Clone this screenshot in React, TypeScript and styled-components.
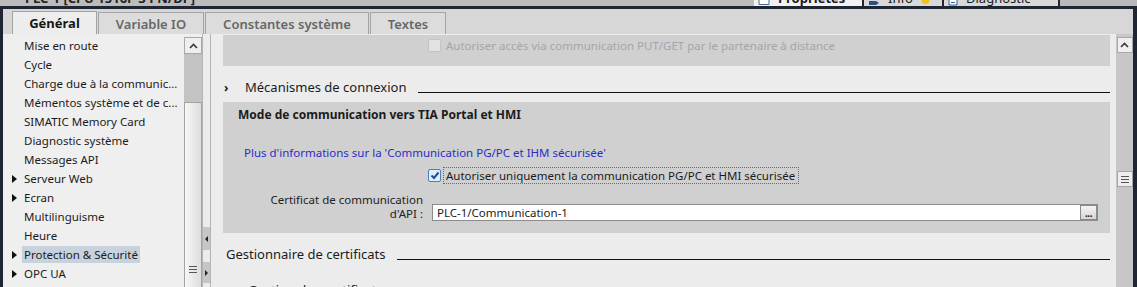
import styled, { createGlobalStyle } from 'styled-components';

const GlobalStyle = createGlobalStyle`
	html, body {
		margin: 0;
		padding: 0;
	}
	body {
		font-family: 'Noto Sans', 'Liberation Sans', sans-serif;
		font-size: 11.5px;
		color: #1b1b1b;
		overflow: hidden;
	}
`;

const dark = '#1e2633';

const Window = styled.div`
	width: 1137px;
	height: 287px;
	display: flex;
	flex-direction: column;
	overflow: hidden;
	background: #d6d6d6;
`;

const TopStrip = styled.div`
	height: 6px;
	flex: none;
	display: flex;
	align-items: flex-end;
	background: #bcbcbc;
	overflow: hidden;
`;

const TopTitle = styled.div`
	flex: 1;
	height: 6px;
	padding-left: 25px;
	display: flex;
	align-items: flex-end;
	overflow: hidden;

	span {
		font-weight: 700;
		font-size: 13px;
		line-height: 14px;
		margin-bottom: 1px;
		color: #222;
	}
`;

const TopTab = styled.div<{ $w: number; $active?: boolean }>`
	width: ${({ $w }) => $w}px;
	height: 6px;
	flex: none;
	display: flex;
	align-items: flex-end;
	gap: 8px;
	padding-left: 4px;
	box-sizing: border-box;
	overflow: hidden;
	background: ${({ $active }) => ($active ? '#f2f2f2' : '#d9d9d9')};
	border-right: 2px solid ${dark};
	font-size: 13px;
	font-weight: ${({ $active }) => ($active ? 700 : 400)};

	span {
		line-height: 14px;
		margin-bottom: 1px;
	}

	svg {
		flex: none;
	}
`;

const TopRest = styled.div`
	width: 77px;
	flex: none;
	height: 6px;
	background: #b9b9b9;
`;

const DarkBand = styled.div`
	height: 3px;
	flex: none;
	background: ${dark};
`;

const Main = styled.div`
	flex: 1;
	min-height: 0;
	display: flex;
	flex-direction: column;
	border-left: 3px solid ${dark};
	border-right: 4px solid ${dark};
`;

const TabBar = styled.div`
	height: 25px;
	flex: none;
	display: flex;
	align-items: flex-end;
	gap: 1px;
	padding-left: 9px;
	background: #d7d7d7;
`;

const Tab = styled.div<{ $w: number; $active?: boolean }>`
	width: ${({ $w }) => $w}px;
	height: ${({ $active }) => ($active ? 23 : 22)}px;
	box-sizing: border-box;
	display: flex;
	align-items: center;
	justify-content: center;
	border: 1px solid #a4a4a4;
	border-bottom: none;
	background: ${({ $active }) => ($active ? '#ededed' : '#dcdcdc')};
	color: ${({ $active }) => ($active ? '#161616' : '#676767')};
	font-size: 13px;
	font-weight: ${({ $active }) => ($active ? 700 : 600)};
`;

const Content = styled.div`
	flex: 1;
	min-height: 0;
	display: flex;
`;

const LeftPanel = styled.div`
	width: 181px;
	flex: none;
	background: #efefef;
	padding-top: 2px;
	overflow: hidden;
	box-sizing: border-box;
`;

const NavItem = styled.div`
	height: 19px;
	display: flex;
	align-items: center;
	padding-left: 7px;
	white-space: nowrap;
`;

const Caret = styled.span<{ $show?: boolean }>`
	width: 12px;
	flex: none;
	display: flex;
	padding-left: 2px;
	box-sizing: border-box;

	&::before {
		content: '';
		display: ${({ $show }) => ($show ? 'block' : 'none')};
		border-left: 5px solid #111;
		border-top: 4px solid transparent;
		border-bottom: 4px solid transparent;
	}
`;

const NavLabel = styled.span<{ $selected?: boolean }>`
	padding: 1px 2px;
	line-height: 15px;
	background: ${({ $selected }) => ($selected ? '#c7d2dc' : 'transparent')};
`;

const LeftScroll = styled.div`
	width: 18px;
	flex: none;
	display: flex;
	flex-direction: column;
	padding-top: 3px;
	background: #efefef;
	box-sizing: border-box;
`;

const ScrollButton = styled.div<{ $h: number }>`
	height: ${({ $h }) => $h}px;
	flex: none;
	display: flex;
	align-items: center;
	justify-content: center;
	background: #efefef;
	border: 1px solid #a9a9a9;
	box-sizing: border-box;
`;

const Track = styled.div`
	height: 48px;
	flex: none;
	background: #c3c3c3;
`;

const Thumb = styled.div`
	flex: 1;
	display: flex;
	flex-direction: column;
	justify-content: flex-end;
	align-items: center;
	padding-bottom: 14px;
	background: linear-gradient(to right, #f6f6f6, #dedede);
	border: 1px solid #a3a3a3;
	border-bottom: none;
`;

const Splitter = styled.div`
	width: 9px;
	flex: none;
	display: flex;
	flex-direction: column;
	justify-content: flex-end;
	gap: 12px;
	padding-bottom: 4px;
	box-sizing: border-box;
	background: #ececec;
	border-left: 1px solid #b4b4b4;
	border-right: 1px solid #b4b4b4;
`;

const SplitArrow = styled.div<{ $h: number; $dir: 'left' | 'right' }>`
	height: ${({ $h }) => $h}px;
	display: flex;
	align-items: center;
	justify-content: center;
	background: #c6c6c6;

	&::before {
		content: '';
		border-top: 3px solid transparent;
		border-bottom: 3px solid transparent;
		${({ $dir }) =>
			$dir === 'left' ? 'border-right: 3px solid #222;' : 'border-left: 3px solid #222;'}
	}
`;

const RightPanel = styled.div`
	flex: 1;
	min-width: 0;
	display: flex;
	flex-direction: column;
	padding: 1px 6px 0 12px;
	background: #ececec;
	overflow: hidden;
`;

const GreyBox = styled.div<{ $h: number; $mt?: number }>`
	height: ${({ $h }) => $h}px;
	margin-top: ${({ $mt = 0 }) => $mt}px;
	flex: none;
	background: #d0d0d0;
	display: flex;
	flex-direction: column;
`;

const FormRow = styled.div<{ $mt?: number }>`
	display: grid;
	grid-template-columns: 205px 1fr;
	align-items: center;
	margin-top: ${({ $mt = 0 }) => $mt}px;
`;

const FieldLabel = styled.div`
	text-align: right;
	padding-right: 5px;
	line-height: 14px;
	color: #222;
	align-self: end;
`;

const CheckLine = styled.div<{ $disabled?: boolean }>`
	display: flex;
	align-items: center;
	gap: 2px;
	color: ${({ $disabled }) => ($disabled ? '#a5a5a5' : '#1b1b1b')};
`;

const CheckBox = styled.span<{ $checked?: boolean; $disabled?: boolean }>`
	width: 13px;
	height: 13px;
	flex: none;
	box-sizing: border-box;
	display: flex;
	align-items: center;
	justify-content: center;
	border: 1px solid ${({ $disabled }) => ($disabled ? '#c4c4c4' : '#4a7fb8')};
	border-radius: 2px;
	background: ${({ $disabled, $checked }) =>
		$disabled ? '#e3e3e3' : $checked ? '#dfeefb' : '#fff'};
`;

const FocusText = styled.span<{ $focus?: boolean }>`
	padding: 0 3px 0 2px;
	line-height: 15px;
	border: 1px dotted ${({ $focus }) => ($focus ? '#6a6a6a' : 'transparent')};
`;

const SectionHead = styled.div<{ $mt: number; $pl: number }>`
	height: 18px;
	flex: none;
	margin-top: ${({ $mt }) => $mt}px;
	padding-left: ${({ $pl }) => $pl}px;
	display: flex;
	align-items: center;
	font-size: 13px;
	white-space: nowrap;
`;

const Chevron = styled.span`
	width: 21px;
	flex: none;
	font-weight: 700;
	font-size: 12px;
`;

const Rule = styled.div`
	flex: 1;
	height: 1px;
	margin: 11px 0 0 12px;
	background: #111;
`;

const BoxTitle = styled.div`
	padding: 4px 0 0 15px;
	line-height: 18px;
	font-weight: 700;
	font-size: 12px;
`;

const InfoLink = styled.div`
	margin: 21px 0 6px 21px;
	line-height: 16px;
	color: #2b2bc8;
`;

const TextField = styled.div`
	height: 17px;
	margin: 0 12px 0 4px;
	box-sizing: border-box;
	display: flex;
	align-items: center;
	justify-content: space-between;
	padding-left: 4px;
	border: 1px solid #8c8c8c;
	background: #fff;
	color: #1b1b1b;
	align-self: end;
`;

const DotsButton = styled.div`
	width: 17px;
	height: 15px;
	box-sizing: border-box;
	display: flex;
	align-items: flex-end;
	justify-content: center;
	padding-bottom: 3px;
	border: 1px solid #8a8a8a;
	background: linear-gradient(#f4f4f4, #d6d6d6);
	font-weight: 700;
	font-size: 10px;
	line-height: 6px;
	letter-spacing: -0.5px;
`;

const RightScroll = styled.div`
	width: 17px;
	flex: none;
	display: flex;
	flex-direction: column;
	align-items: center;
	padding-top: 3px;
	background: #c7c7c7;
`;

const GripBox = styled.div`
	width: 16px;
	height: 16px;
	margin-top: 118px;
	box-sizing: border-box;
	display: flex;
	align-items: center;
	justify-content: center;
	background: #eeeeee;
	border: 1px solid #a5a5a5;
`;

const UpIcon = () => (
	<svg width='11' height='8' viewBox='0 0 11 8'>
		<path d='M2 6 L5.5 2.5 L9 6' fill='none' stroke='#3a3a3a' strokeWidth='1.6' />
	</svg>
);

const GripIcon = () => (
	<svg width='8' height='7' viewBox='0 0 8 7'>
		<path d='M0 0.5 H8 M0 3.5 H8 M0 6.5 H8' stroke='#555' strokeWidth='1' />
	</svg>
);

const CheckIcon = () => (
	<svg width='10' height='9' viewBox='0 0 10 9'>
		<path d='M1.5 4.5 L4 7 L8.5 1.5' fill='none' stroke='#1d4f8c' strokeWidth='2' />
	</svg>
);

// bottom halves of the small icons in the inspector tabs above
const SheetIcon = () => (
	<svg width='12' height='6' viewBox='0 0 12 6'>
		<path d='M1 0 V4.5 H11 V0' fill='#fff' stroke='#4b6a96' strokeWidth='1' />
	</svg>
);

const InfoArrowIcon = () => (
	<svg width='12' height='6' viewBox='0 0 12 6'>
		<path d='M1 1 H8 L11 3 L8 5 H1 Z' fill='#2f4f8a' />
	</svg>
);

const DiagIcon = () => (
	<svg width='10' height='6' viewBox='0 0 10 6'>
		<path d='M1 0 V5 H9 V0' fill='#fff' stroke='#3b5b9a' strokeWidth='1' />
		<path d='M3 2.5 H7' stroke='#3b5b9a' strokeWidth='1' />
	</svg>
);

const WarnDot = () => (
	<svg width='9' height='6' viewBox='0 0 9 6'>
		<path d='M0.5 0 A4 4 0 0 0 8.5 0 Z' fill='#f2c21a' />
	</svg>
);

const navItems: { label: string; caret?: boolean; selected?: boolean }[] = [
	{ label: 'Mise en route' },
	{ label: 'Cycle' },
	{ label: 'Charge due à la communic...' },
	{ label: 'Mémentos système et de c...' },
	{ label: 'SIMATIC Memory Card' },
	{ label: 'Diagnostic système' },
	{ label: 'Messages API' },
	{ label: 'Serveur Web', caret: true },
	{ label: 'Ecran', caret: true },
	{ label: 'Multilinguisme' },
	{ label: 'Heure' },
	{ label: 'Protection & Sécurité', caret: true, selected: true },
	{ label: 'OPC UA', caret: true },
];

const App = () => {
	return (
		<Window>
			<GlobalStyle />
			<TopStrip>
				<TopTitle>
					<span>PLC-1 [CPU 1516F-3 PN/DP]</span>
				</TopTitle>
				<TopTab $w={110} $active>
					<SheetIcon />
					<span>Propriétés</span>
				</TopTab>
				<TopTab $w={80}>
					<InfoArrowIcon />
					<span>Info</span>
					<WarnDot />
				</TopTab>
				<TopTab $w={116}>
					<DiagIcon />
					<span>Diagnostic</span>
				</TopTab>
				<TopRest />
			</TopStrip>
			<DarkBand />
			<Main>
				<TabBar>
					<Tab $w={85} $active>
						Général
					</Tab>
					<Tab $w={106}>Variable IO</Tab>
					<Tab $w={164}>Constantes système</Tab>
					<Tab $w={76}>Textes</Tab>
				</TabBar>
				<Content>
					<LeftPanel>
						{navItems.map((item) => (
							<NavItem key={item.label}>
								<Caret $show={item.caret} />
								<NavLabel $selected={item.selected}>{item.label}</NavLabel>
							</NavItem>
						))}
					</LeftPanel>
					<LeftScroll>
						<ScrollButton $h={17}>
							<UpIcon />
						</ScrollButton>
						<Track />
						<Thumb>
							<GripIcon />
						</Thumb>
					</LeftScroll>
					<Splitter>
						<SplitArrow $h={23} $dir='left' />
						<SplitArrow $h={21} $dir='right' />
					</Splitter>
					<RightPanel>
						<GreyBox $h={31}>
							<FormRow $mt={2}>
								<span />
								<CheckLine $disabled>
									<CheckBox $disabled />
									<FocusText>
										Autoriser accès via communication PUT/GET par le partenaire à distance
									</FocusText>
								</CheckLine>
							</FormRow>
						</GreyBox>
						<SectionHead $mt={12} $pl={1}>
							<Chevron>›</Chevron>
							Mécanismes de connexion
							<Rule />
						</SectionHead>
						<GreyBox $h={131} $mt={6}>
							<BoxTitle>Mode de communication vers TIA Portal et HMI</BoxTitle>
							<InfoLink>
								Plus d'informations sur la 'Communication PG/PC et IHM sécurisée'
							</InfoLink>
							<FormRow>
								<span />
								<CheckLine>
									<CheckBox $checked>
										<CheckIcon />
									</CheckBox>
									<FocusText $focus>
										Autoriser uniquement la communication PG/PC et HMI sécurisée
									</FocusText>
								</CheckLine>
							</FormRow>
							<FormRow $mt={9}>
								<FieldLabel>
									Certificat de communication
									<br />
									d'API :
								</FieldLabel>
								<TextField>
									PLC-1/Communication-1
									<DotsButton>...</DotsButton>
								</TextField>
							</FormRow>
						</GreyBox>
						<SectionHead $mt={12} $pl={3}>
							Gestionnaire de certificats
							<Rule />
						</SectionHead>
						<SectionHead $mt={18} $pl={25}>
							Gestion des certificats
						</SectionHead>
					</RightPanel>
					<RightScroll>
						<ScrollButton $h={16} style={{ width: 16 }}>
							<UpIcon />
						</ScrollButton>
						<GripBox>
							<GripIcon />
						</GripBox>
					</RightScroll>
				</Content>
			</Main>
		</Window>
	);
};

export default App;
